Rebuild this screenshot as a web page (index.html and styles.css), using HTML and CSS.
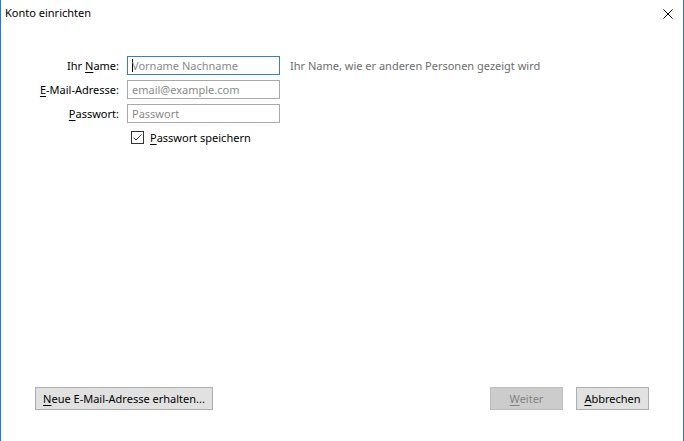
FILE: index.html
```html
<!DOCTYPE html>
<html lang="de">
<head>
<meta charset="utf-8">
<title>Konto einrichten</title>
<link rel="stylesheet" href="styles.css">
</head>
<body>
<div class="window">
  <div class="titlebar">
    <span class="title">Konto einrichten</span>
    <span class="close" aria-label="Schließen">
      <svg width="10" height="10" viewBox="0 0 10 10"><path d="M0.5 0.5 L9.5 9.5 M9.5 0.5 L0.5 9.5" stroke="#000" stroke-width="1" fill="none"/></svg>
    </span>
  </div>
  <div class="content">
    <div class="form">
      <div class="row">
        <label class="label">Ihr <u>N</u>ame:</label>
        <div class="input focused"><span class="caret"></span>Vorname Nachname</div>
        <span class="hint">Ihr Name, wie er anderen Personen gezeigt wird</span>
      </div>
      <div class="row">
        <label class="label"><u>E</u>-Mail-Adresse:</label>
        <div class="input">email@example.com</div>
      </div>
      <div class="row">
        <label class="label"><u>P</u>asswort:</label>
        <div class="input">Passwort</div>
      </div>
      <div class="row check-row">
        <span class="label"></span>
        <span class="checkbox">
          <svg width="13" height="13" viewBox="0 0 13 13"><rect x="0.5" y="0.5" width="12" height="12" fill="#fff" stroke="#333"/><path d="M2.5 6.5 L5 9 L10.5 3.5" stroke="#333" stroke-width="1" fill="none"/></svg>
        </span>
        <span class="check-label"><u>P</u>asswort speichern</span>
      </div>
    </div>
    <div class="footer">
      <button class="btn wide"><u>N</u>eue E-Mail-Adresse erhalten...</button>
      <div class="right">
        <button class="btn disabled"><u>W</u>eiter</button>
        <button class="btn"><u>A</u>bbrechen</button>
      </div>
    </div>
  </div>
</div>
</body>
</html>
```

FILE: styles.css
```css
* { box-sizing: border-box; }
html, body { margin: 0; padding: 0; }
body {
  width: 684px;
  height: 441px;
  font-family: "Noto Sans", "Open Sans", sans-serif;
  font-size: 11px;
  color: #000;
  background: #fff;
}
.window {
  width: 684px;
  height: 441px;
  border-left: 1px solid #2b79c2;
  border-right: 1px solid #2b79c2;
  display: flex;
  flex-direction: column;
}
.titlebar {
  height: 30px;
  display: flex;
  align-items: flex-start;
  justify-content: space-between;
  padding: 4px 10px 0 4px;
}
.title { line-height: 18px; }
.close { margin-top: 5px; display: flex; }
.content {
  flex: 1;
  display: flex;
  flex-direction: column;
  justify-content: space-between;
  padding: 26px 34px 31px 34px;
}
.form { display: flex; flex-direction: column; gap: 5px; }
.row { display: flex; align-items: center; height: 19px; }
.label {
  width: 84px;
  text-align: right;
  margin-right: 8px;
  white-space: nowrap;
}
.input {
  width: 153px;
  height: 19px;
  border: 1px solid #a9a9a9;
  color: #8a8a8a;
  padding: 0 4px;
  line-height: 17px;
  white-space: nowrap;
  display: flex;
  align-items: center;
}
.input.focused { border-color: #3c7fb1; }
.caret {
  display: inline-block;
  width: 1px;
  height: 13px;
  background: #000;
  margin-right: -1px;
}
.hint { color: #6d6d6d; margin-left: 10px; white-space: nowrap; }
.checkbox { display: flex; margin-left: 4px; margin-right: 6px; }
.footer { display: flex; justify-content: space-between; align-items: flex-end; }
.right { display: flex; gap: 13px; }
.btn {
  font-family: inherit;
  font-size: 11px;
  height: 23px;
  padding: 0 6px;
  border: 1px solid #adadad;
  background: #e1e1e1;
  color: #000;
  line-height: 21px;
  min-width: 73px;
}
.btn.wide { width: 178px; }
.btn.disabled {
  background: #cccccc;
  border-color: #bfbfbf;
  color: #838383;
}
u { text-decoration-thickness: 1px; text-underline-offset: 2px; }
```
